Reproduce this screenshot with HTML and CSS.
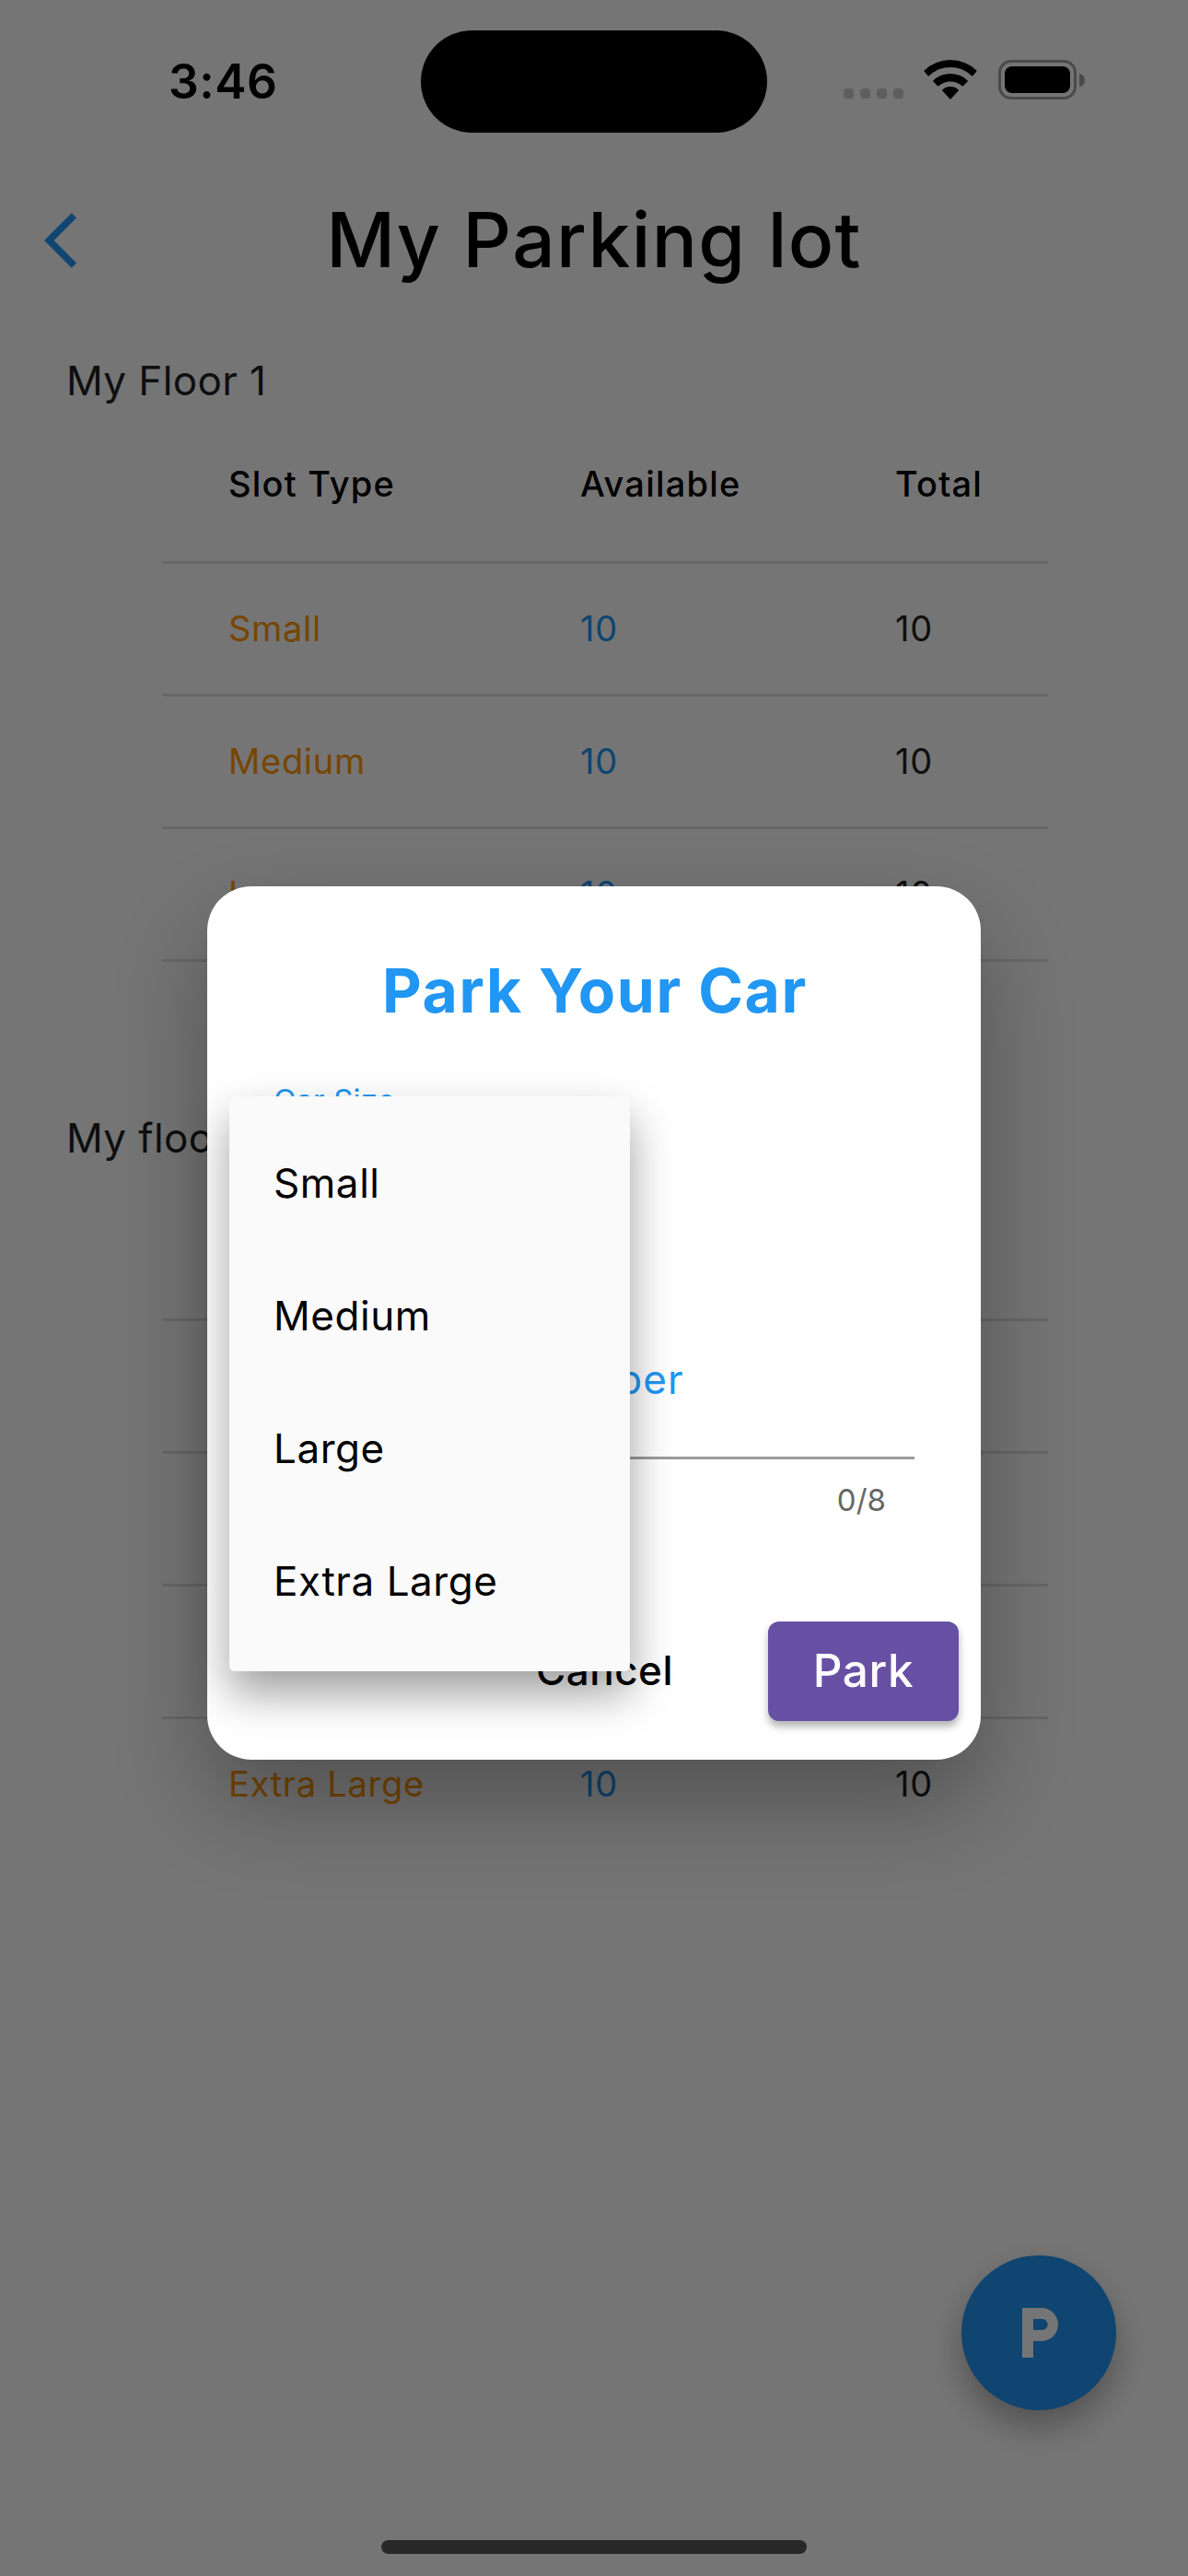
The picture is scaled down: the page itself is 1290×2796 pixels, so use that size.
FILE: index.html
```html
<!DOCTYPE html>
<html lang="en">
<head>
<meta charset="utf-8">
<title>My Parking lot</title>
<link rel="stylesheet" href="styles.css">
</head>
<body>
<div class="screen">
  <header class="status">
    <div class="status-left"><span class="clock">3:46</span></div>
    <div class="island"></div>
    <div class="status-right">
      <div class="dots"><i></i><i></i><i></i><i></i></div>
      <svg class="wifi" width="58" height="43" viewBox="0 0 58 43">
        <path d="M0.6 12.6Q0.1 12 0.7 11.4A41 41 0 0 1 57.3 11.4Q57.9 12 57.4 12.6L53.4 17.2Q52.8 17.9 52.1 17.2A33.500 33.500 0 0 0 5.900 17.200Q5.200 17.900 4.600 17.200Z"/>
        <path d="M10.4 23.600Q9.800 22.900 10.500 22.200A27.400 27.400 0 0 1 47.500 22.200Q48.200 22.900 47.600 23.600L43 28.300Q42.400 28.900 41.700 28.300A19 19 0 0 0 16.300 28.300Q15.600 28.900 15 28.300Z"/>
        <path d="M20.300 33.600Q19.700 32.900 20.500 32.200A13 13 0 0 1 37.500 32.200Q38.300 32.900 37.700 33.600L29.700 42.200Q29 42.900 28.300 42.200Z"/>
      </svg>
      <div class="battery"><div class="cell"><div class="charge"></div></div><div class="nub"></div></div>
    </div>
  </header>

  <nav class="appbar">
    <svg class="back" width="72" height="72" viewBox="0 0 24 24"><path d="M11.670 3.870L9.900 2.100 0 12l9.900 9.900 1.770-1.770L3.540 12z"/></svg>
    <h1 class="title">My Parking lot</h1>
  </nav>

  <main class="floors">
    <section class="floor">
      <h2 class="floor-name">My Floor 1</h2>
      <div class="table">
        <div class="row head"><span>Slot Type</span><span>Available</span><span>Total</span></div>
        <div class="row"><span class="type">Small</span><span class="free">10</span><span>10</span></div>
        <div class="row"><span class="type">Medium</span><span class="free">10</span><span>10</span></div>
        <div class="row"><span class="type">Large</span><span class="free">10</span><span>10</span></div>
        <div class="row"><span class="type">Extra Large</span><span class="free">10</span><span>10</span></div>
      </div>
    </section>
    <section class="floor">
      <h2 class="floor-name">My floor 2</h2>
      <div class="table">
        <div class="row head"><span>Slot Type</span><span>Available</span><span>Total</span></div>
        <div class="row"><span class="type">Small</span><span class="free">10</span><span>10</span></div>
        <div class="row"><span class="type">Medium</span><span class="free">10</span><span>10</span></div>
        <div class="row"><span class="type">Large</span><span class="free">10</span><span>10</span></div>
        <div class="row"><span class="type">Extra Large</span><span class="free">10</span><span>10</span></div>
      </div>
    </section>
  </main>

  <div class="fab"><svg width="72" height="72" viewBox="0 0 24 24"><path d="M13 3H6v18h4v-6h3c3.310 0 6-2.690 6-6s-2.690-6-6-6zm.2 8H10V7h3.200c1.100 0 2 .9 2 2s-.9 2-2 2z"/></svg></div>

  <div class="scrim">
    <div class="dialog">
      <h2 class="dialog-title">Park Your Car</h2>
      <div class="field size-field"><span class="float-label">Car Size</span></div>
      <div class="field number-field"><span class="label">Registration Number</span></div>
      <div class="counter">0/8</div>
      <div class="actions">
        <span class="cancel">Cancel</span>
        <span class="park">Park</span>
      </div>
      <div class="menu">
        <div class="item">Small</div>
        <div class="item">Medium</div>
        <div class="item">Large</div>
        <div class="item">Extra Large</div>
      </div>
    </div>
  </div>
  <div class="home"></div>
</div>
</body>
</html>
```
FILE: styles.css
```css
* { box-sizing: border-box; margin: 0; padding: 0; }
body { font-family: Inter, "Liberation Sans", sans-serif; background: #fff; color: #212121; }
.screen { position: relative; width: 1290px; height: 2796px; overflow: hidden; background: #fff; }

.status { position: relative; z-index: 3; height: 177px; padding-top: 33px; display: flex; color: #000; }
.status-left { width: 457px; padding-left: 183px; }
.clock { display: block; margin-top: 24px; line-height: 62px; font-size: 51.500px; font-weight: 600; letter-spacing: .5px; }
.island { width: 376px; height: 111px; border-radius: 56px; background: #000; }
.status-right { display: flex; align-items: flex-start; padding: 32px 0 0 83px; }
.dots { display: flex; gap: 7px; margin: 31px 22px 0 0; }
.dots i { width: 11px; height: 11px; border-radius: 4px; background: #5e5e5e; }
.wifi { display: block; margin-right: 23px; }
.battery { display: flex; align-items: center; gap: 3px; }
.cell { width: 85px; height: 43px; padding: 4px; border: 3px solid #4a4a4a; border-radius: 14px; }
.charge { height: 29px; border-radius: 8px; background: #000; }
.nub { width: 6px; height: 14px; border-radius: 0 6px 6px 0 / 0 7px 7px 0; background: #4a4a4a; }

.appbar { height: 168px; padding: 0 48px; display: flex; align-items: center; }
.back { fill: #2196f3; }
.title { flex: 1; margin-right: 72px; padding-bottom: 1px; text-align: center; font-size: 82px; font-weight: 500; color: #000; letter-spacing: 1.350px; white-space: nowrap; }

.floor { height: 822px; }
.floor-name { height: 96px; padding: 41px 72px 0; line-height: 54px; font-size: 44px; font-weight: 400; letter-spacing: .4px; }
.table { width: 962px; margin-left: 176px; }
.row { display: grid; grid-template-columns: 382px 342px 1fr; align-items: center; height: 144px; padding: 0 0 1px 72px; border-top: 3px solid #e0e0e0; font-size: 38px; letter-spacing: .7px; }
.head { height: 168px; padding-bottom: 0; border-top: 0; font-weight: 500; color: #000; letter-spacing: 1.200px; }
.type { color: #ff9800; }
.free { color: #2196f3; }

.fab { position: absolute; right: 78px; top: 2448px; width: 168px; height: 168px; display: flex; align-items: center; justify-content: center; border-radius: 50%; background: #2196f3; box-shadow: 0 18px 36px rgba(0,0,0,.3); }
.fab svg { fill: #fff; }

.scrim { position: absolute; inset: 0; z-index: 2; padding: 177px 0 102px; display: flex; align-items: center; justify-content: center; background: rgba(0,0,0,.54); }
.dialog { position: relative; width: 840px; height: 948px; border-radius: 48px; background: #fff; box-shadow: 0 48px 100px rgba(0,0,0,.3); }
.dialog-title { margin-top: 71px; height: 85px; line-height: 84px; text-align: center; font-size: 66px; font-weight: 700; color: #2196f3; letter-spacing: 1.600px; padding-left: 2px; }
.field { margin: 0 72px; color: #2196f3; }
.size-field { height: 228px; padding-top: 54px; }
.float-label { display: block; line-height: 44px; font-size: 33px; letter-spacing: .2px; }
.number-field { height: 238px; border-bottom: 3px solid #9c9c9c; }
.label { display: block; padding-top: 124px; line-height: 54px; font-size: 44px; letter-spacing: 1px; }
.counter { margin: 22px 103px 0 0; text-align: right; line-height: 44px; font-size: 33px; color: #666; }
.actions { display: flex; justify-content: flex-end; align-items: center; margin: 110px 24px 0 0; }
.cancel { margin-right: 103px; padding-bottom: 2px; font-size: 44px; font-weight: 500; color: #000; letter-spacing: .5px; }
.park { width: 207px; height: 108px; line-height: 107px; text-align: center; border-radius: 12px; background: #6750a4; color: #fff; font-size: 49.500px; font-weight: 500; letter-spacing: .6px; box-shadow: 0 6px 9px rgba(0,0,0,.3); }
.menu { position: absolute; left: 24px; top: 228px; width: 435px; height: 624px; padding: 24px 48px; border-radius: 6px; background: #fafafa; box-shadow: 0 24px 48px rgba(0,0,0,.38); color: #000; }
.item { height: 144px; line-height: 140px; font-size: 44px; letter-spacing: .55px; white-space: nowrap; }

.home { position: absolute; z-index: 3; left: 414px; top: 2757px; width: 462px; height: 15px; border-radius: 8px; background: #292929; }
```
